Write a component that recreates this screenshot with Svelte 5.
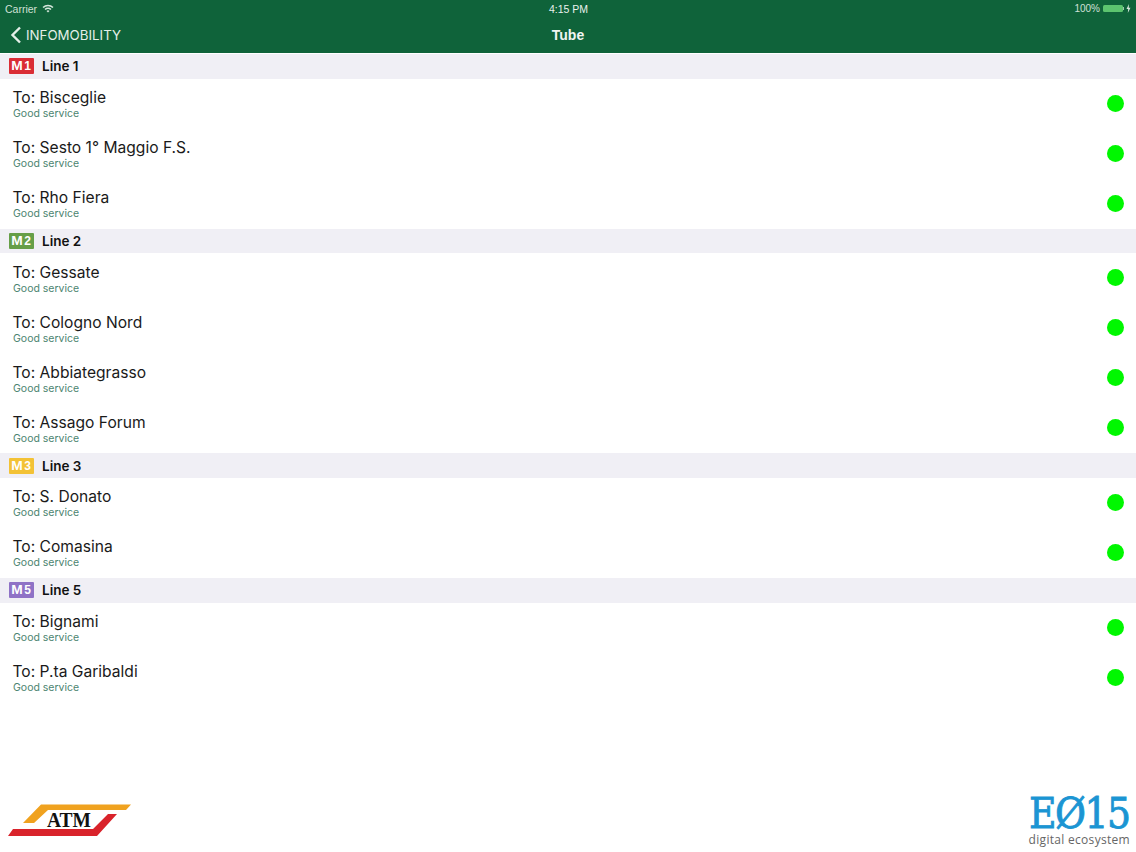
<script>
	const lines = [
		{ id: 'M1', name: 'Line 1', color: '#d9232b', stops: ['Bisceglie', 'Sesto 1° Maggio F.S.', 'Rho Fiera'] },
		{ id: 'M2', name: 'Line 2', color: '#5f9a3e', stops: ['Gessate', 'Cologno Nord', 'Abbiategrasso', 'Assago Forum'] },
		{ id: 'M3', name: 'Line 3', color: '#f4c02c', stops: ['S. Donato', 'Comasina'] },
		{ id: 'M5', name: 'Line 5', color: '#8a6cc4', stops: ['Bignami', 'P.ta Garibaldi'] }
	]
</script>

<div class="page">
	<header>
		<div class="status">
			<div class="status-left">
				<span>Carrier</span>
				<svg width="12" height="9" viewBox="0 0 12 9">
					<path d="M0.5 3 A8 8 0 0 1 11.5 3 L10.4 4.1 A6.4 6.4 0 0 0 1.6 4.1Z" fill="#d6e6dc"/>
					<path d="M2.5 5 A5 5 0 0 1 9.5 5 L8.4 6.1 A3.4 3.4 0 0 0 3.6 6.1Z" fill="#d6e6dc"/>
					<path d="M4.5 7 A2.2 2.2 0 0 1 7.5 7 L6 8.6Z" fill="#d6e6dc"/>
				</svg>
			</div>
			<div class="clock">4:15 PM</div>
			<div class="status-right">
				<span>100%</span>
				<div class="battery"></div>
				<div class="battery-tip"></div>
				<svg width="5" height="9" viewBox="0 0 5 9">
					<path d="M3 0 L0.5 5 H2.2 L1.8 9 L4.5 3.8 H2.7Z" fill="#d6e6dc"/>
				</svg>
			</div>
		</div>
		<nav>
			<div class="back">
				<svg width="12" height="18" viewBox="0 0 12 18">
					<path d="M10 1.5 L2.5 9 L10 16.5" fill="none" stroke="#e4efe8" stroke-width="2.4"/>
				</svg>
				<span>INFOMOBILITY</span>
			</div>
			<div class="title">Tube</div>
			<div class="nav-spacer"></div>
		</nav>
	</header>

	<main>
		{#each lines as line}
			<section>
				<div class="section-head">
					<div class="badge" style="background: {line.color}">
						<span class="badge-m">M</span><span>{line.id[1]}</span>
					</div>
					<span class="line-name">{line.name}</span>
				</div>
				{#each line.stops as stop}
					<div class="row">
						<div class="row-text">
							<div class="stop">To: {stop}</div>
							<div class="state">Good service</div>
						</div>
						<div class="dot"></div>
					</div>
				{/each}
			</section>
		{/each}
	</main>

	<footer>
		<svg class="atm" width="124" height="34" viewBox="0 0 124 34">
			<polygon points="34,0.5 124,0.5 119,6 41,6 27,19 16,19" fill="#f0a21f"/>
			<polygon points="1,32 6,25 86,25 101,10 110,10 90,32" fill="#d9232b"/>
			<text x="40" y="23" class="atm-text" textLength="44" lengthAdjust="spacingAndGlyphs">ATM</text>
		</svg>
		<div class="eo15">
			<div class="eo15-mark">EØ15</div>
			<div class="eo15-sub">digital ecosystem</div>
		</div>
	</footer>
</div>

<style>
	:global(body) {
		margin: 0;
		background: #fff;
	}

	.page {
		width: 1136px;
		height: 852px;
		display: flex;
		flex-direction: column;
		font-family: "Liberation Sans", Arial, sans-serif;
		color: #111;
		overflow: hidden;
	}

	header {
		height: 53px;
		background: #0f633a;
		color: #e4efe8;
		flex: none;
	}

	.status {
		height: 17px;
		padding: 0 5px;
		display: grid;
		grid-template-columns: 1fr auto 1fr;
		align-items: center;
		font-size: 10.5px;
		color: #cfe0d6;
	}

	.status-left {
		display: flex;
		align-items: center;
		gap: 5px;
	}

	.clock {
		color: #e8f1ec;
		font-weight: 500;
		margin-left: 1px;
	}

	.status-right {
		display: flex;
		align-items: center;
		justify-content: flex-end;
		font-size: 10px;
	}

	.battery {
		width: 20px;
		height: 7px;
		margin-left: 3px;
		background: #5cc46f;
		border-radius: 1.5px;
	}

	.battery-tip {
		width: 1px;
		height: 3px;
		background: #9fc8ae;
		margin-right: 2px;
	}

	nav {
		height: 36px;
		display: grid;
		grid-template-columns: 1fr auto 1fr;
		align-items: center;
	}

	.back {
		display: flex;
		align-items: center;
		gap: 4px;
		padding-left: 10px;
		font-family: Inter, "Liberation Sans", sans-serif;
		font-size: 13.3px;
	}

	.title {
		font-size: 14px;
		font-weight: 700;
		color: #f0f5f2;
	}

	main {
		flex: 1;
		padding-top: 1px;
	}

	.section-head {
		height: 24.67px;
		box-sizing: border-box;
		display: flex;
		align-items: center;
		gap: 8px;
		padding-left: 9px;
		background: #f0eff5;
		font-family: Inter, "Liberation Sans", sans-serif;
		font-size: 13.5px;
		font-weight: 600;
	}

	.badge {
		width: 25px;
		height: 16px;
		border-radius: 1px;
		display: flex;
		align-items: center;
		justify-content: center;
		color: #fff;
		font-family: "Liberation Sans", sans-serif;
		font-size: 12px;
		font-weight: 700;
		opacity: 0.95;
	}

	.badge-m {
		font-size: 12px;
		margin-right: 2px;
		transform: scaleX(1.15);
	}

	.line-name {
		color: #111;
	}

	.row {
		height: 50px;
		box-sizing: border-box;
		display: flex;
		align-items: center;
		justify-content: space-between;
		padding: 0 13px;
	}

	.stop {
		font-family: Inter, "Liberation Sans", sans-serif;
		font-size: 15.6px;
		line-height: 21px;
		color: #1a1a1a;
		margin-left: -0.5px;
	}

	.state {
		font-family: Inter, "Liberation Sans", sans-serif;
		font-size: 10.5px;
		line-height: 13px;
		color: #4b8470;
		margin-top: -1px;
	}

	.dot {
		width: 17px;
		height: 17px;
		border-radius: 50%;
		background: #00f700;
		margin-right: -1px;
		margin-bottom: 1px;
	}

	footer {
		flex: none;
		display: flex;
		justify-content: space-between;
		align-items: flex-end;
		padding: 0 6px 4px 7px;
	}

	.atm {
		margin-bottom: 10px;
	}

	.atm-text {
		font-family: "Liberation Serif", serif;
		font-size: 21px;
		font-weight: 700;
		fill: #111;
	}

	.eo15 {
		text-align: center;
	}

	.eo15-mark {
		font-family: "DejaVu Serif", serif;
		font-size: 42px;
		font-stretch: condensed;
		line-height: 36px;
		font-weight: 400;
		letter-spacing: -1.5px;
		color: #1b95d3;
		-webkit-text-stroke: 0.8px #1b95d3;
	}

	.eo15-sub {
		font-family: "Open Sans", sans-serif;
		font-size: 12px;
		line-height: 16px;
		color: #666;
		letter-spacing: 0.3px;
	}
</style>
